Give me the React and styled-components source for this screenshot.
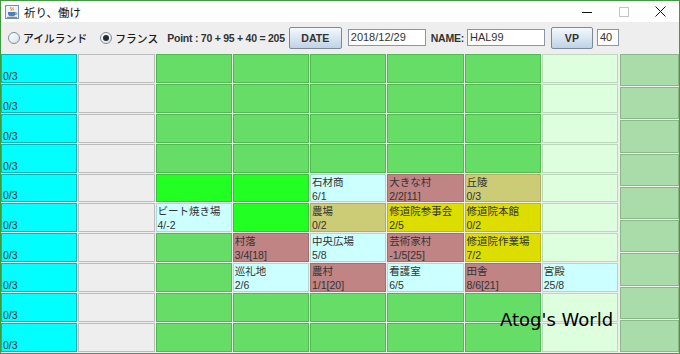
import React from 'react';
import styled, { createGlobalStyle } from 'styled-components';

const Global = createGlobalStyle`
  html, body { margin: 0; padding: 0; background: #ffffff; }
  body {
    width: 680px; height: 354px; overflow: hidden;
    font-family: "Liberation Sans", "Noto Sans CJK JP", sans-serif;
  }
  * { box-sizing: border-box; }
`;

const Window = styled.div`
  position: relative;
  width: 680px;
  height: 354px;
  border: 1px solid #3f9b3f;
  display: flex;
  flex-direction: column;
  background: #eeeeee;
`;

const TitleBar = styled.div`
  height: 21px;
  flex: none;
  background: #ffffff;
  display: flex;
  align-items: center;
`;

const AppIcon = styled.svg`
  margin-left: 4px;
  width: 14px;
  height: 14px;
  flex: none;
`;

const Title = styled.div`
  margin-left: 5px;
  font-family: "Noto Sans CJK JP", sans-serif;
  font-size: 11.5px;
  color: #111;
  flex: 1;
`;

const WinButton = styled.div`
  width: 37px;
  height: 21px;
  display: flex;
  align-items: center;
  justify-content: center;
  flex: none;
`;

const Toolbar = styled.div`
  height: 32px;
  flex: none;
  display: flex;
  align-items: center;
  padding-left: 7px;
  padding-bottom: 1px;
`;

const Radio = styled.label`
  display: flex;
  align-items: center;
  margin-left: ${p => p.$ml || 0}px;
  font-family: "Noto Sans CJK JP", sans-serif;
  font-size: 10.8px;
  font-weight: 500;
  color: #1a1a1a;
  white-space: nowrap;
`;

const RadioDot = styled.span`
  position: relative;
  width: 12px;
  height: 12px;
  border-radius: 50%;
  border: 1px solid #7d8c9c;
  background: linear-gradient(135deg, #ffffff 0%, #d6e2ee 100%);
  margin-right: 3px;
  flex: none;
  &::after {
    content: "";
    display: ${p => (p.$on ? 'block' : 'none')};
    position: absolute;
    left: 2px; top: 2px;
    width: 6px; height: 6px;
    border-radius: 50%;
    background: #2a2a2a;
  }
`;

const BoldText = styled.span`
  margin-left: ${p => p.$ml || 0}px;
  font-size: 10.5px;
  font-weight: bold;
  color: #333;
  white-space: nowrap;
  letter-spacing: -0.25px;
`;

const Button = styled.div`
  margin-left: ${p => p.$ml || 0}px;
  width: ${p => p.$w}px;
  height: 22px;
  border: 1px solid #7a8a9b;
  border-radius: 2px;
  background: linear-gradient(#f4f8fc 0%, #dde8f3 45%, #bed2e6 100%);
  display: flex;
  align-items: center;
  justify-content: center;
  font-size: 10.6px;
  font-weight: bold;
  color: #333;
  flex: none;
`;

const Field = styled.div`
  margin-left: ${p => p.$ml || 0}px;
  width: ${p => p.$w}px;
  height: 17px;
  border: 1px solid #8796a8;
  background: #ffffff;
  padding-left: 2px;
  font-size: 11px;
  line-height: 15px;
  color: #333;
  flex: none;
`;

const Board = styled.div`
  flex: 1;
  min-height: 0;
  display: flex;
  gap: 2px;
  padding-bottom: 1px;
`;

const MainGrid = styled.div`
  width: 617px;
  flex: none;
  display: grid;
  grid-template-columns: repeat(8, 1fr);
  grid-template-rows: repeat(10, 1fr);
  gap: 1px;
`;

const SideGrid = styled.div`
  flex: 1;
  display: grid;
  grid-template-rows: repeat(9, 1fr);
  gap: 1px;
`;

const PALETTE = {
  count: ['#00ffff', '#10b4b4'],
  empty: ['#eeeeee', '#bdbdbd'],
  field: ['#66dd66', '#52b852'],
  bright: ['#22ff22', '#3cc03c'],
  lc: ['#ccffff', '#b2d6d6'],
  brown: ['#c08484', '#a27070'],
  olive: ['#cccc77', '#aeae66'],
  yellow: ['#dddd00', '#bcbc10'],
  lg: ['#ddffdd', '#bcd8bc'],
  side: ['#aadcaa', '#8cb88c'],
};

const Cell = styled.div`
  background: ${p => PALETTE[p.$kind][0]};
  border: 1px solid ${p => PALETTE[p.$kind][1]};
  display: flex;
  flex-direction: column;
  justify-content: ${p => (p.$bottom ? 'flex-end' : 'flex-start')};
  padding-left: 1px;
  font-size: 10.5px;
  line-height: ${p => (p.$bottom ? 12 : 14)}px;
  color: #333;
  white-space: nowrap;
  overflow: hidden;
  min-width: 0;
  min-height: 0;
`;

const Watermark = styled.div`
  position: absolute;
  left: 499px;
  top: 310px;
  font-family: "DejaVu Sans", sans-serif;
  font-size: 18px;
  line-height: 18px;
  color: #000;
  white-space: nowrap;
  pointer-events: none;
`;

const plain = ['field', 'field', 'field', 'field', 'field', 'lg'];
const ROWS = [
  plain, plain, plain, plain,
  ['bright', 'bright', ['lc', '石材商', '6/1'], ['brown', '大きな村', '2/2[11]'], ['olive', '丘陵', '0/3'], 'lg'],
  [['lc', 'ビート焼き場', '4/-2'], 'bright', ['olive', '農場', '0/2'], ['yellow', '修道院参事会', '2/5'], ['yellow', '修道院本館', '0/2'], 'lg'],
  ['field', ['brown', '村落', '3/4[18]'], ['lc', '中央広場', '5/8'], ['brown', '芸術家村', '-1/5[25]'], ['yellow', '修道院作業場', '7/2'], 'lg'],
  ['field', ['lc', '巡礼地', '2/6'], ['brown', '農村', '1/1[20]'], ['lc', '看護室', '6/5'], ['brown', '田舎', '8/6[21]'], ['lc', '宮殿', '25/8']],
  plain, plain,
];

function JavaIcon() {
  return (
    <AppIcon viewBox="0 0 14 14">
      <rect x="0.5" y="0.5" width="13" height="13" fill="#eef3fa" stroke="#6d8fb8" />
      <path d="M6 2 C4.5 3.5 7.5 4 6 5.8 M8 2.5 C7 3.5 9 4 8 5.5" stroke="#e0701a" strokeWidth="1" fill="none" />
      <path d="M3 7 H10.5 V8.5 C10.5 10.5 9 11.3 6.8 11.3 C4.5 11.3 3 10.5 3 8.5 Z" fill="#4a7fc0" />
      <path d="M10.5 7.6 C12.3 7.6 12.3 9.6 10.3 9.6" stroke="#4a7fc0" strokeWidth="1" fill="none" />
      <rect x="2" y="11.8" width="10" height="1.2" fill="#e0701a" />
    </AppIcon>
  );
}

export default function App() {
  return (
    <>
      <Global />
      <Window>
        <TitleBar>
          <JavaIcon />
          <Title>祈り、働け</Title>
          <WinButton>
            <svg width="10" height="10" viewBox="0 0 10 10"><path d="M0 5.5 H10" stroke="#111" strokeWidth="1" /></svg>
          </WinButton>
          <WinButton>
            <svg width="10" height="10" viewBox="0 0 10 10"><rect x="0.5" y="0.5" width="9" height="9" fill="none" stroke="#c6c6c6" /></svg>
          </WinButton>
          <WinButton>
            <svg width="11" height="11" viewBox="0 0 11 11"><path d="M0.5 0.5 L10.5 10.5 M10.5 0.5 L0.5 10.5" stroke="#111" strokeWidth="1" /></svg>
          </WinButton>
        </TitleBar>
        <Toolbar>
          <Radio><RadioDot />アイルランド</Radio>
          <Radio $ml={13}><RadioDot $on />フランス</Radio>
          <BoldText $ml={9}>Point : 70 + 95 + 40 = 205</BoldText>
          <Button $ml={4} $w={53}>DATE</Button>
          <Field $ml={6} $w={78}>2018/12/29</Field>
          <BoldText $ml={5}>NAME:</BoldText>
          <Field $ml={3} $w={78}>HAL99</Field>
          <Button $ml={6} $w={42}>VP</Button>
          <Field $ml={4} $w={22}>40</Field>
        </Toolbar>
        <Board>
          <MainGrid>
            {ROWS.map((row, r) => (
              <React.Fragment key={r}>
                <Cell $kind="count" $bottom>0/3</Cell>
                <Cell $kind="empty" />
                {row.map((c, i) =>
                  Array.isArray(c) ? (
                    <Cell key={i} $kind={c[0]}>
                      <span>{c[1]}</span>
                      <span>{c[2]}</span>
                    </Cell>
                  ) : (
                    <Cell key={i} $kind={c} />
                  )
                )}
              </React.Fragment>
            ))}
          </MainGrid>
          <SideGrid>
            {Array.from({ length: 9 }).map((_, i) => (
              <Cell key={i} $kind="side" />
            ))}
          </SideGrid>
        </Board>
        <Watermark>Atog's World</Watermark>
      </Window>
    </>
  );
}
